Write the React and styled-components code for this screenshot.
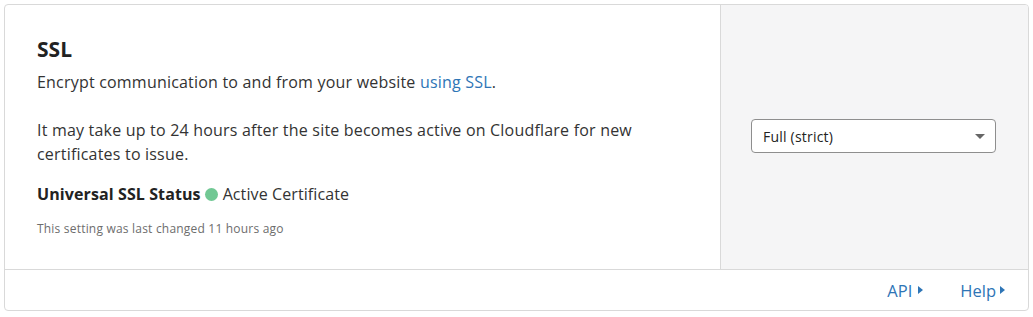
import React from "react";
import styled, { createGlobalStyle } from "styled-components";

const Global = createGlobalStyle`
  html, body { margin: 0; padding: 0; background: #fff; }
  body { font-family: "Open Sans", "Liberation Sans", sans-serif; color: #333; }
`;

const Page = styled.div`
  padding: 4px;
`;

const Card = styled.div`
  border: 1px solid #d9d9d9;
  border-radius: 4px;
  background: #fff;
  overflow: hidden;
`;

const Body = styled.div`
  display: flex;
  height: 264px;
  border-bottom: 1px solid #d9d9d9;
`;

const Main = styled.div`
  flex: 0 0 70%;
  box-sizing: border-box;
  padding: 30px 32px 0;
  border-right: 1px solid #d9d9d9;
`;

const Side = styled.div`
  flex: 1;
  background: #f5f5f6;
  display: flex;
  align-items: center;
  padding: 0 32px 2px 30px;
`;

const Title = styled.h3`
  margin: 0 0 7px;
  font-size: 21px;
  line-height: 28px;
  font-weight: 700;
  color: #222;
`;

const Para = styled.p`
  margin: 0 0 ${(p) => p.$mb || 0}px;
  font-size: 16px;
  letter-spacing: 0.2px;
  line-height: 24px;
  color: #333;
`;

const Link = styled.a`
  color: #2e75b6;
  text-decoration: none;
`;

const Status = styled.div`
  display: flex;
  align-items: center;
  margin-top: 16px;
  font-size: 16px;
  letter-spacing: 0.1px;
  line-height: 24px;
`;

const StatusLabel = styled.strong`
  font-weight: 700;
  color: #222;
`;

const Dot = styled.span`
  width: 13px;
  height: 13px;
  border-radius: 50%;
  background: #71c894;
  margin: 0 5px 0 4px;
`;

const Meta = styled.div`
  margin-top: 15px;
  font-size: 12px;
  letter-spacing: 0.2px;
  line-height: 16px;
  color: #6d6d6d;
`;

const Select = styled.div`
  flex: 1;
  height: 34px;
  box-sizing: border-box;
  border: 1px solid #8e8e8e;
  border-radius: 4px;
  background: #fff;
  display: flex;
  align-items: center;
  justify-content: space-between;
  padding: 0 10px 0 11px;
  font-size: 14px;
  letter-spacing: 0.2px;
  color: #222;
`;

const Caret = styled.span`
  width: 0;
  height: 0;
  border-left: 5px solid transparent;
  border-right: 5px solid transparent;
  border-top: 5px solid #666;
`;

const Footer = styled.div`
  height: 40px;
  display: flex;
  align-items: center;
  justify-content: flex-end;
  gap: 37px;
  padding-right: 23px;
`;

const FooterLink = styled.a`
  display: flex;
  align-items: center;
  color: #2e75b6;
  font-size: 16.5px;
  text-decoration: none;
`;

const Arrow = styled.span`
  width: 0;
  height: 0;
  margin-left: ${(p) => p.$gap || 5}px;
  border-top: 4.5px solid transparent;
  border-bottom: 4.5px solid transparent;
  border-left: 5px solid #2e75b6;
`;

export default function App() {
  return (
    <>
      <Global />
      <Page>
        <Card>
          <Body>
            <Main>
              <Title>SSL</Title>
              <Para $mb={24}>
                Encrypt communication to and from your website <Link href="#">using SSL</Link>.
              </Para>
              <Para>
                It may take up to 24 hours after the site becomes active on Cloudflare for new
                certificates to issue.
              </Para>
              <Status>
                <StatusLabel>Universal SSL Status</StatusLabel>
                <Dot />
                Active Certificate
              </Status>
              <Meta>This setting was last changed 11 hours ago</Meta>
            </Main>
            <Side>
              <Select>
                Full (strict)
                <Caret />
              </Select>
            </Side>
          </Body>
          <Footer>
            <FooterLink href="#">API<Arrow $gap={6} /></FooterLink>
            <FooterLink href="#">Help<Arrow $gap={4} /></FooterLink>
          </Footer>
        </Card>
      </Page>
    </>
  );
}
